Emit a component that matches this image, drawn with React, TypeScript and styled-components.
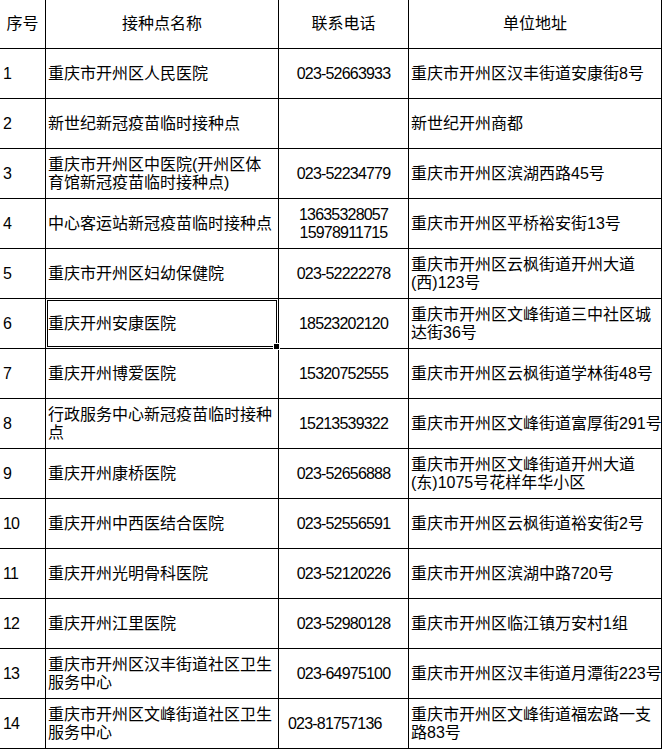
import React from "react";
import styled, { createGlobalStyle } from "styled-components";

const GlobalStyle = createGlobalStyle`
  html, body {
    margin: 0;
    padding: 0;
    background: #ffffff;
  }
  body {
    font-family: "Liberation Sans", "Noto Sans CJK SC", sans-serif;
    color: #000000;
  }
`;

const Sheet = styled.div`
  display: flex;
  flex-direction: column;
  width: 662px;
  font-size: 16px;
  line-height: 18px;
`;

const Row = styled.div<{ $header?: boolean }>`
  display: grid;
  grid-template-columns: 46px 233px 130px 253px;
  height: ${(p) => (p.$header ? 49 : 50)}px;
  box-sizing: border-box;
  border-bottom: 1px solid #000;
`;

type Align = "left" | "center";

const Cell = styled.div<{ $align?: Align; $pad?: number; $digits?: boolean }>`
  position: relative;
  display: flex;
  flex-direction: column;
  justify-content: center;
  align-items: ${(p) => (p.$align === "center" ? "center" : "flex-start")};
  box-sizing: border-box;
  border-right: 1px solid #000;
  padding-left: ${(p) => p.$pad ?? 0}px;
  white-space: nowrap;
  letter-spacing: ${(p) => (p.$digits ? "-0.8px" : "0")};
  text-align: ${(p) => (p.$align === "center" ? "center" : "left")};
`;

const Line = styled.span`
  display: block;
`;

const Selection = styled.div`
  position: absolute;
  top: 1px;
  left: 1px;
  right: 1px;
  bottom: 1px;
  border: 1px solid #000;
  pointer-events: none;
`;

const Handle = styled.div`
  position: absolute;
  right: -4px;
  bottom: -4px;
  width: 5px;
  height: 5px;
  background: #000;
  border: 1px solid #fff;
  z-index: 2;
`;

type Entry = {
  no: string;
  name: string[];
  phone: string[];
  addr: string[];
  phoneLeft?: boolean;
  selected?: boolean;
};

const rows: Entry[] = [
  { no: "1", name: ["重庆市开州区人民医院"], phone: ["023-52663933"], addr: ["重庆市开州区汉丰街道安康街8号"] },
  { no: "2", name: ["新世纪新冠疫苗临时接种点"], phone: [], addr: ["新世纪开州商都"] },
  {
    no: "3",
    name: ["重庆市开州区中医院(开州区体", "育馆新冠疫苗临时接种点)"],
    phone: ["023-52234779"],
    addr: ["重庆市开州区滨湖西路45号"],
  },
  {
    no: "4",
    name: ["中心客运站新冠疫苗临时接种点"],
    phone: ["13635328057", "15978911715"],
    addr: ["重庆市开州区平桥裕安街13号"],
  },
  {
    no: "5",
    name: ["重庆市开州区妇幼保健院"],
    phone: ["023-52222278"],
    addr: ["重庆市开州区云枫街道开州大道", "(西)123号"],
  },
  {
    no: "6",
    name: ["重庆开州安康医院"],
    phone: ["18523202120"],
    addr: ["重庆市开州区文峰街道三中社区城", "达街36号"],
    selected: true,
  },
  { no: "7", name: ["重庆开州博爱医院"], phone: ["15320752555"], addr: ["重庆市开州区云枫街道学林街48号"] },
  {
    no: "8",
    name: ["行政服务中心新冠疫苗临时接种", "点"],
    phone: ["15213539322"],
    addr: ["重庆市开州区文峰街道富厚街291号"],
  },
  {
    no: "9",
    name: ["重庆开州康桥医院"],
    phone: ["023-52656888"],
    addr: ["重庆市开州区文峰街道开州大道", "(东)1075号花样年华小区"],
  },
  { no: "10", name: ["重庆开州中西医结合医院"], phone: ["023-52556591"], addr: ["重庆市开州区云枫街道裕安街2号"] },
  { no: "11", name: ["重庆开州光明骨科医院"], phone: ["023-52120226"], addr: ["重庆市开州区滨湖中路720号"] },
  { no: "12", name: ["重庆开州江里医院"], phone: ["023-52980128"], addr: ["重庆市开州区临江镇万安村1组"] },
  {
    no: "13",
    name: ["重庆市开州区汉丰街道社区卫生", "服务中心"],
    phone: ["023-64975100"],
    addr: ["重庆市开州区汉丰街道月潭街223号"],
  },
  {
    no: "14",
    name: ["重庆市开州区文峰街道社区卫生", "服务中心"],
    phone: ["023-81757136"],
    addr: ["重庆市开州区文峰街道福宏路一支", "路83号"],
    phoneLeft: true,
  },
];

const Lines = ({ items }: { items: string[] }) => (
  <>
    {items.map((t, i) => (
      <Line key={i}>{t}</Line>
    ))}
  </>
);

export default function App() {
  return (
    <>
      <GlobalStyle />
      <Sheet>
        <Row $header>
          <Cell $align="center">序号</Cell>
          <Cell $align="center">接种点名称</Cell>
          <Cell $align="center">联系电话</Cell>
          <Cell $align="center">单位地址</Cell>
        </Row>
        {rows.map((r) => (
          <Row key={r.no}>
            <Cell $pad={3} $digits>
              {r.no}
            </Cell>
            <Cell $pad={2}>
              <Lines items={r.name} />
              {r.selected && (
                <Selection>
                  <Handle />
                </Selection>
              )}
            </Cell>
            <Cell $align={r.phoneLeft ? "left" : "center"} $pad={r.phoneLeft ? 9 : 0} $digits>
              <Lines items={r.phone} />
            </Cell>
            <Cell $pad={2}>
              <Lines items={r.addr} />
            </Cell>
          </Row>
        ))}
      </Sheet>
    </>
  );
}
